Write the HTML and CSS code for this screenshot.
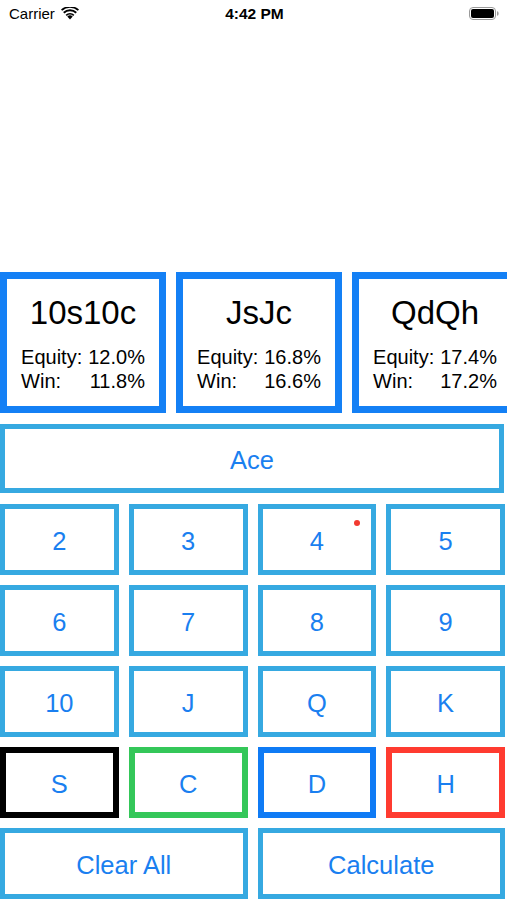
FILE: index.html
```html
<!DOCTYPE html>
<html>
<head>
<meta charset="utf-8">
<link rel="stylesheet" href="styles.css">
</head>
<body>
<div class="screen">
  <div class="status">
    <div class="status-left">
      <span class="carrier">Carrier</span>
      <svg class="wifi" width="18" height="13" viewBox="0 0 18 13">
        <path d="M9 12.6 L6.3 9.6 A4 4 0 0 1 11.7 9.6 Z" fill="#000"/>
        <path d="M4.6 7.7 A6.6 6.6 0 0 1 13.4 7.7 L12.2 9.0 A4.9 4.9 0 0 0 5.8 9.0 Z" fill="#000"/>
        <path d="M2.1 5.0 A10.2 10.2 0 0 1 15.9 5.0 L14.6 6.4 A8.4 8.4 0 0 0 3.4 6.4 Z" fill="#000"/>
        <path d="M0 2.6 A13.3 13.3 0 0 1 18 2.6 L16.8 3.8 A11.6 11.6 0 0 0 1.2 3.8 Z" fill="#000"/>
      </svg>
    </div>
    <div class="time">4:42 PM</div>
    <div class="status-right">
      <svg class="battery" width="31" height="13" viewBox="0 0 31 13">
        <rect x="0.5" y="0.5" width="26" height="12" rx="3.5" fill="none" stroke="#9a9a9a" stroke-width="1"/>
        <rect x="2" y="2" width="23" height="9" rx="2" fill="#000"/>
        <path d="M28 4.3 a1.6 1.6 0 0 1 1.6 1.6 v1.2 a1.6 1.6 0 0 1 -1.6 1.6 z" fill="#9a9a9a"/>
      </svg>
    </div>
  </div>

  <div class="spacer"></div>

  <div class="hands">
    <div class="hand">
      <div class="hand-title">10s10c</div>
      <div class="stats">
        <span>Equity:</span><span class="val">12.0%</span>
        <span>Win:</span><span class="val">11.8%</span>
      </div>
    </div>
    <div class="hand">
      <div class="hand-title">JsJc</div>
      <div class="stats">
        <span>Equity:</span><span class="val">16.8%</span>
        <span>Win:</span><span class="val">16.6%</span>
      </div>
    </div>
    <div class="hand">
      <div class="hand-title">QdQh</div>
      <div class="stats">
        <span>Equity:</span><span class="val">17.4%</span>
        <span>Win:</span><span class="val">17.2%</span>
      </div>
    </div>
  </div>

  <button class="key ace">Ace</button>

  <div class="keys">
    <button class="key">2</button>
    <button class="key">3</button>
    <button class="key">4<span class="dot"></span></button>
    <button class="key">5</button>
    <button class="key">6</button>
    <button class="key">7</button>
    <button class="key">8</button>
    <button class="key">9</button>
    <button class="key">10</button>
    <button class="key">J</button>
    <button class="key">Q</button>
    <button class="key">K</button>
    <button class="key suit spade">S</button>
    <button class="key suit club">C</button>
    <button class="key suit diamond">D</button>
    <button class="key suit heart">H</button>
    <button class="key wide2">Clear All</button>
    <button class="key wide2">Calculate</button>
  </div>
</div>
</body>
</html>
```

FILE: styles.css
```css
* { box-sizing: border-box; }
html, body {
  margin: 0;
  padding: 0;
  background: #fff;
}
body {
  width: 507px;
  height: 900px;
  overflow: hidden;
  font-family: "Liberation Sans", Arial, sans-serif;
}
.screen {
  display: flex;
  flex-direction: column;
  height: 900px;
}
.status {
  height: 27px;
  flex: none;
  display: flex;
  align-items: center;
  justify-content: space-between;
  padding: 0 7px 0 9px;
  color: #000;
}
.status-left {
  display: flex;
  align-items: center;
  gap: 6px;
  font-size: 15px;
  width: 120px;
}
.wifi { margin-top: -1px; }
.time {
  font-weight: bold;
  font-size: 15.5px;
}
.status-right {
  width: 120px;
  display: flex;
  justify-content: flex-end;
}
.spacer {
  height: 245px;
  flex: none;
}
.hands {
  display: flex;
  gap: 10px;
  overflow: hidden;
  flex: none;
}
.hand {
  flex: none;
  width: 166px;
  height: 141px;
  border: 7px solid #1480f5;
  display: flex;
  flex-direction: column;
  align-items: center;
  padding-top: 14px;
  color: #000;
}
.hand-title {
  font-size: 33px;
  line-height: 40px;
  height: 40px;
}
.stats {
  margin-top: 12px;
  display: grid;
  grid-template-columns: auto auto;
  column-gap: 6px;
  font-size: 20px;
  line-height: 24px;
}
.stats .val { text-align: right; }

.key {
  position: relative;
  background: #fff;
  border: 5px solid #36a9e1;
  border-radius: 0;
  font-family: "Liberation Sans", Arial, sans-serif;
  font-size: 25.5px;
  color: #1a7ff0;
  padding: 4px 0 0 0;
  margin: 0;
}
.ace {
  flex: none;
  margin-top: 11px;
  width: 504px;
  height: 69px;
}
.keys {
  margin-top: 11px;
  width: 505px;
  display: grid;
  grid-template-columns: repeat(4, 1fr);
  grid-template-rows: repeat(5, 71px);
  column-gap: 10px;
  row-gap: 10px;
}
.wide2 { grid-column: span 2; }
.suit { border-width: 6px; }
.spade { border-color: #000; }
.club { border-color: #34c759; }
.diamond { border-color: #0f7bf5; }
.heart { border-color: #ff3b30; }
.dot {
  position: absolute;
  width: 6px;
  height: 6px;
  border-radius: 50%;
  background: #f23a30;
  top: 11px;
  left: 91px;
}
```
